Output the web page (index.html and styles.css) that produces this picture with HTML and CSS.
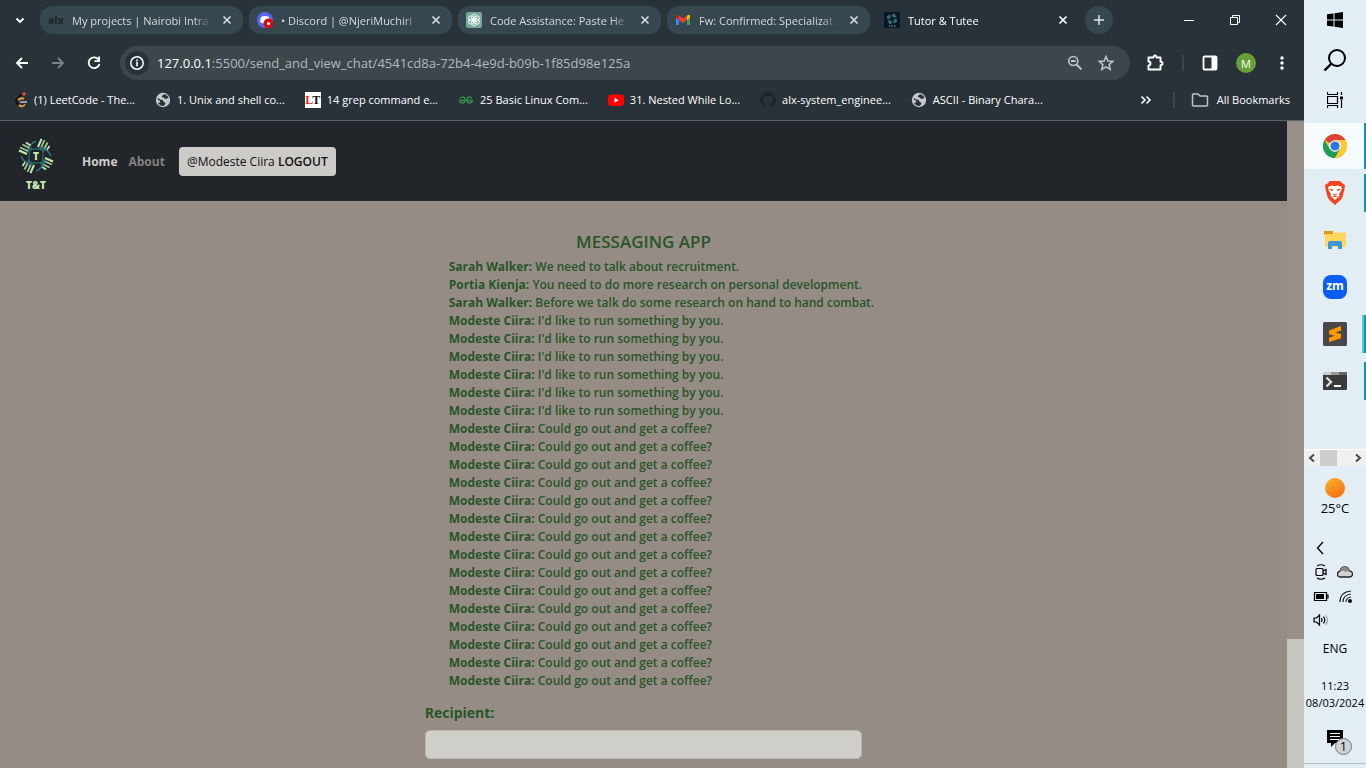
FILE: index.html
```html
<!DOCTYPE html>
<html lang="en">
<head>
<meta charset="utf-8">
<title>Tutor &amp; Tutee</title>
<link rel="stylesheet" href="styles.css">
</head>
<body>
<svg class="defs" aria-hidden="true">
  <symbol id="x" viewBox="0 0 16 16"><path d="M4.500 4.500l7 7M11.500 4.500l-7 7" fill="none" stroke="currentColor" stroke-width="1.700"/></symbol>
  <symbol id="globe" viewBox="0 0 16 16"><circle cx="8" cy="8" r="7.200" fill="#c3c8cc"/><path d="M2.400 6.200c2 .2 2.600 1.600 4.400 1.600 1.700 0 1 2.200 2.700 2.500 1.500.2 1 2.400-.9 3.700-2 .2-4.700-1-5.700-3.200 1.500 0 2.800-.4 2.300-1.600C4.500 8 2.400 8 2.400 6.200zM8.500 2.200c-.2 1.500-1.800 1.300-1.700 2.500.1 1 2 .3 2.500 1.400.5 1.200 2.300 1.100 3 .2.500-.5 1.200-.4 1.500.1C13.200 4 11.200 2.300 8.500 2.200z" fill="#29333a"/></symbol>
  <symbol id="mark" viewBox="0 0 40 54">
    <g id="arm"><path d="M22 11l3.500-8" stroke="#c6eab0" stroke-width="2"/><path d="M25 12l3.500-8M28 13.500l3.500-7" stroke="#9fc595" stroke-width="1.800"/><path d="M30.500 14.500l3-4.500" stroke="#c6eab0" stroke-width="1.600"/><path d="M23.500 12.500l5 3" stroke="#3f6c66" stroke-width="1.500"/><path d="M11 16q2-8 9-11" stroke="#2b7a80" stroke-width="1.400" fill="none"/></g>
    <use href="#arm" transform="rotate(90 20 20)"/><use href="#arm" transform="rotate(180 20 20)"/><use href="#arm" transform="rotate(270 20 20)"/>
    <path d="M13 25V17q0-4 5-4h6M27 15v8q0 4-5 4h-7" fill="none" stroke="#24616b" stroke-width="1.300"/>
  </symbol>
</svg>
<div class="desktop">
<div class="browser">
  <header class="tabstrip">
    <button class="plain list" aria-label="Search tabs"><svg width="16" height="16" viewBox="0 0 16 16"><path d="M4.500 6.500L8 10l3.500-3.500" fill="none" stroke="#fff" stroke-width="1.800"/></svg></button>
    <div class="tab"><span class="alx">alx</span><span class="title">My projects | Nairobi Intra</span><button class="plain" aria-label="Close"><svg width="16" height="16"><use href="#x"/></svg></button></div>
    <div class="tab"><svg width="16" height="16" viewBox="0 0 16 16"><circle cx="8" cy="8" r="8" fill="#5865f2"/><path d="M4 5q4-2 8 0l1 5q-5 3-10 0z" fill="#fff"/><circle cx="11.500" cy="11.500" r="5" fill="#d90b12"/><circle cx="11.500" cy="11.500" r="1.500" fill="#fff"/></svg><span class="title">• Discord | @NjeriMuchiri</span><button class="plain" aria-label="Close"><svg width="16" height="16"><use href="#x"/></svg></button></div>
    <div class="tab"><svg width="16" height="16" viewBox="0 0 16 16"><rect width="16" height="16" rx="2" fill="#74aa9c"/><g fill="none" stroke="#eef7f4" stroke-width="1"><ellipse cx="8" cy="5.500" rx="2.400" ry="3.400" id="pt"/><use href="#pt" transform="rotate(60 8 8)"/><use href="#pt" transform="rotate(120 8 8)"/><use href="#pt" transform="rotate(180 8 8)"/><use href="#pt" transform="rotate(240 8 8)"/><use href="#pt" transform="rotate(300 8 8)"/></g></svg><span class="title">Code Assistance: Paste He</span><button class="plain" aria-label="Close"><svg width="16" height="16"><use href="#x"/></svg></button></div>
    <div class="tab"><svg width="16" height="16" viewBox="0 0 16 16"><path d="M1 4v9h3V7z" fill="#4285f4"/><path d="M15 4v9h-3V7z" fill="#34a853"/><path d="M4 3.500l4 3 4-3V8l-4 3-4-3z" fill="#ea4335"/><path d="M1 4q0-2 3-.5V8L1 5.800z" fill="#c5221f"/><path d="M15 4q0-2-3-.5V8l3-2.200z" fill="#fbbc04"/></svg><span class="title">Fw: Confirmed: Specializat</span><button class="plain" aria-label="Close"><svg width="16" height="16"><use href="#x"/></svg></button></div>
    <div class="tab active"><svg width="16" height="16" viewBox="0 0 16 16"><rect width="16" height="16" fill="#04192c"/><svg x="2" y="1" width="12" height="16"><use href="#mark"/></svg><path d="M5 14h1.500M7.500 14H9M10 14h1.500" stroke="#86a897"/></svg><span class="title">Tutor &amp; Tutee</span><button class="plain" aria-label="Close"><svg width="16" height="16"><use href="#x"/></svg></button></div>
    <button class="plain plus" aria-label="New tab"><svg width="14" height="14" viewBox="0 0 14 14"><path d="M7 2v10M2 7h10" stroke="#dfe4e7" stroke-width="1.500"/></svg></button>
    <div class="winctl">
      <button class="plain" aria-label="Minimize"><svg width="12" height="12"><path d="M1 6.500h10" stroke="#fff"/></svg></button>
      <button class="plain" aria-label="Restore"><svg width="12" height="12"><path d="M1.500 3.500h7v7h-7zM3.500 3.500v-2h7v7h-2" fill="none" stroke="#fff"/></svg></button>
      <button class="plain" aria-label="Close window"><svg width="12" height="12"><path d="M1 1l10 10M11 1L1 11" stroke="#fff" stroke-width="1.100"/></svg></button>
    </div>
  </header>
  <div class="toolbar">
    <div class="history">
      <button class="plain" aria-label="Back"><svg width="16" height="16" viewBox="0 0 16 16"><path d="M14 8H3M8 3L3 8l5 5" fill="none" stroke="#fff" stroke-width="1.800"/></svg></button>
      <button class="plain" aria-label="Forward"><svg width="16" height="16" viewBox="0 0 16 16"><path d="M2 8h11M8 3l5 5-5 5" fill="none" stroke="#7b8489" stroke-width="1.800"/></svg></button>
      <button class="plain" aria-label="Reload"><svg width="16" height="16" viewBox="0 0 16 16"><path d="M12.800 5A5.400 5.400 0 1 0 13.400 9" fill="none" stroke="#fff" stroke-width="1.800"/><path d="M14 1.500V7H8.500V5.300h3.700V1.500z" fill="#fff"/></svg></button>
    </div>
    <div class="omnibox">
      <button class="plain info" aria-label="Site information"><svg width="16" height="16" viewBox="0 0 16 16"><circle cx="8" cy="8" r="6.200" fill="none" stroke="#fff" stroke-width="1.500"/><path d="M8 7v4.200M8 4.600v1.600" stroke="#fff" stroke-width="1.600"/></svg></button>
      <a class="url" href="#"><b>127.0.0.1</b>:5500/send_and_view_chat/4541cd8a-72b4-4e9d-b09b-1f85d98e125a</a>
      <button class="plain" aria-label="Zoom"><svg width="16" height="16" viewBox="0 0 16 16"><circle cx="6.300" cy="6" r="4.500" fill="none" stroke="#c1c5c7" stroke-width="1.600"/><path d="M4 6h4.600M9.500 9.500l5 5" stroke="#c1c5c7" stroke-width="1.800"/></svg></button>
      <button class="plain" aria-label="Bookmark"><svg width="18" height="18" viewBox="0 0 18 18"><path d="M9 2.500l1.900 4.500 4.900.4-3.700 3.200 1.100 4.800L9 12.800l-4.200 2.600 1.100-4.800-3.700-3.200 4.900-.4z" fill="none" stroke="#c1c5c7" stroke-width="1.500"/></svg></button>
    </div>
    <div class="tools">
      <button class="plain" aria-label="Extensions"><svg width="18" height="18" viewBox="0 0 18 18"><path d="M2.500 3.500h5q0-2 1.500-2t1.500 2h4v4.300q2 0 2 1.700t-2 1.700v4.300h-12v-4q2 0 2-2t-2-2z" fill="none" stroke="#fff" stroke-width="1.900" stroke-linejoin="round"/></svg></button>
      <i class="rule"></i>
      <button class="plain" aria-label="Side panel"><svg width="16" height="16" viewBox="0 0 16 16"><rect x="1.500" y="1.500" width="13" height="13" rx="1" fill="none" stroke="#fff" stroke-width="1.800"/><path d="M9.500 1h5v14h-5z" fill="#fff"/></svg></button>
      <button class="plain avatar">M</button>
      <button class="plain" aria-label="Menu"><svg width="16" height="16" fill="#fff"><circle cx="8" cy="3" r="1.700"/><circle cx="8" cy="8" r="1.700"/><circle cx="8" cy="13" r="1.700"/></svg></button>
    </div>
  </div>
  <nav class="bookmarks" aria-label="Bookmarks">
    <a href="#"><svg width="14" height="16" viewBox="0 0 14 16"><path d="M8 2L3 7q-2 2 0 4l2 2" fill="none" stroke="#101416" stroke-width="2"/><path d="M5 13q3 3 6-.5M4 8q3-3 6-1" fill="none" stroke="#f5a33b" stroke-width="1.800"/><path d="M6 10h7" stroke="#b9b9b9" stroke-width="1.600"/><circle cx="10" cy="2" r="1.800" fill="#ee4540"/></svg>(1) LeetCode - The...</a>
    <a href="#"><svg width="16" height="16"><use href="#globe"/></svg>1. Unix and shell co...</a>
    <a href="#"><span class="lt"><span>L</span>T</span>14 grep command e...</a>
    <a href="#"><svg width="16" height="16" viewBox="0 0 16 16" fill="none" stroke="#2f8d46" stroke-width="1.400"><path d="M2 6.500Q3 5 5 5q2 0 2 3t-2.500 3Q2 11 1.500 8.500H14.500Q14 11 11.500 11 9 11 9 8t2-3q2 0 3 1.500"/></svg>25 Basic Linux Com...</a>
    <a href="#"><svg width="16" height="16"><rect y="2.500" width="16" height="11.500" rx="3" fill="#f00"/><path d="M6.500 5.800v5l4-2.500z" fill="#fff"/></svg>31. Nested While Lo...</a>
    <a href="#"><svg width="16" height="16" viewBox="0 0 16 16"><path fill="#1c2329" d="M8 0a8 8 0 0 0-2.500 15.600c.4.100.5-.2.500-.4v-1.500c-2.200.5-2.700-1-2.700-1-.4-.9-.9-1.200-.9-1.200-.7-.5.100-.5.100-.5.800.1 1.200.8 1.200.8.700 1.300 1.900.9 2.300.7.100-.5.300-.9.500-1.100-1.800-.2-3.600-.9-3.600-4 0-.9.300-1.600.8-2.100-.1-.2-.4-1 .1-2.100 0 0 .7-.2 2.200.8a7.600 7.600 0 0 1 4 0c1.500-1 2.200-.8 2.200-.8.400 1.100.2 1.900.1 2.100.5.600.8 1.300.8 2.100 0 3.100-1.900 3.800-3.700 4 .3.200.6.700.6 1.500v2.200c0 .2.100.5.500.4A8 8 0 0 0 8 0z"/></svg>alx-system_enginee...</a>
    <a href="#"><svg width="16" height="16"><use href="#globe"/></svg>ASCII - Binary Chara...</a>
    <button class="plain more" aria-label="More bookmarks"><svg width="14" height="14"><path d="M2.500 3.500L6 7l-3.500 3.500M7.500 3.500L11 7l-3.500 3.500" fill="none" stroke="#fff" stroke-width="1.600"/></svg></button>
    <i class="rule"></i>
    <a class="all" href="#"><svg width="18" height="16"><path d="M1.500 3q0-1 1-1h4.500l2 2h6.500q1 0 1 1v8q0 1-1 1h-13q-1 0-1-1z" fill="none" stroke="#c1c5c7" stroke-width="1.500"/></svg>All Bookmarks</a>
  </nav>
  <div class="viewport">
    <div class="page">
      <nav class="navbar">
        <a class="brand" href="#" aria-label="T&amp;T"><svg width="40" height="54" viewBox="0 0 40 54"><use href="#mark"/><text x="20" y="24" class="t1">T</text><text x="20" y="53" class="t2">T&amp;T</text></svg></a>
        <a class="home" href="#">Home</a><a href="#">About</a>
        <button class="logout">@Modeste Ciira <b>LOGOUT</b></button>
      </nav>
      <main class="chat">
        <h1>MESSAGING APP</h1>
        <ul>
          <li><b>Sarah Walker:</b> We need to talk about recruitment.</li>
          <li><b>Portia Kienja:</b> You need to do more research on personal development.</li>
          <li><b>Sarah Walker:</b> Before we talk do some research on hand to hand combat.</li>
          <li><b>Modeste Ciira:</b> I'd like to run something by you.</li>
          <li><b>Modeste Ciira:</b> I'd like to run something by you.</li>
          <li><b>Modeste Ciira:</b> I'd like to run something by you.</li>
          <li><b>Modeste Ciira:</b> I'd like to run something by you.</li>
          <li><b>Modeste Ciira:</b> I'd like to run something by you.</li>
          <li><b>Modeste Ciira:</b> I'd like to run something by you.</li>
          <li><b>Modeste Ciira:</b> Could go out and get a coffee?</li>
          <li><b>Modeste Ciira:</b> Could go out and get a coffee?</li>
          <li><b>Modeste Ciira:</b> Could go out and get a coffee?</li>
          <li><b>Modeste Ciira:</b> Could go out and get a coffee?</li>
          <li><b>Modeste Ciira:</b> Could go out and get a coffee?</li>
          <li><b>Modeste Ciira:</b> Could go out and get a coffee?</li>
          <li><b>Modeste Ciira:</b> Could go out and get a coffee?</li>
          <li><b>Modeste Ciira:</b> Could go out and get a coffee?</li>
          <li><b>Modeste Ciira:</b> Could go out and get a coffee?</li>
          <li><b>Modeste Ciira:</b> Could go out and get a coffee?</li>
          <li><b>Modeste Ciira:</b> Could go out and get a coffee?</li>
          <li><b>Modeste Ciira:</b> Could go out and get a coffee?</li>
          <li><b>Modeste Ciira:</b> Could go out and get a coffee?</li>
          <li><b>Modeste Ciira:</b> Could go out and get a coffee?</li>
          <li><b>Modeste Ciira:</b> Could go out and get a coffee?</li>
        </ul>
        <label for="recipient">Recipient:</label>
        <input id="recipient" type="text">
      </main>
    </div>
    <div class="scrollbar"><div class="thumb"></div></div>
  </div>
</div>
<aside class="taskbar">
  <button class="plain sys" aria-label="Start"><svg width="16" height="16"><path d="M0 2.300L6.500 1.400V7.500H0zM7.500 1.200L16 0v7.500H7.500zM0 8.500h6.500v6.100L0 13.700zM7.500 8.500H16V16l-8.500-1.200z"/></svg></button>
  <button class="plain sys" aria-label="Search"><svg width="24" height="24"><circle cx="14" cy="10" r="8" fill="none" stroke="#000" stroke-width="2"/><path d="M8.500 15.500L1.500 22.500" stroke="#000" stroke-width="2.400"/></svg></button>
  <button class="plain sys" aria-label="Task view"><svg width="16" height="16" fill="none" stroke="#000"><path d="M.5 4.500h10v7H.5zM.5 0v2.500h10V0M.5 16v-2.500h10V16M14.500 0v3M14.500 8v8" stroke-width="1.200"/><path d="M13 4.500h3v3h-3z" fill="#000" stroke="none"/></svg></button>
  <div class="apps">
    <button class="plain app current" aria-label="Chrome"><svg width="24" height="24" viewBox="0 0 24 24"><circle cx="12" cy="12" r="12" fill="#fcc934"/><path d="M12 12L1.600 6A12 12 0 0 1 22.400 6H12z" fill="#db4437"/><path d="M12 24A12 12 0 0 1 1.600 6l5.200 9L12 18l5.200-3z" fill="#1e9e54"/><path d="M12 6h10.400A12 12 0 0 1 12 24l5.200-9z" fill="#fcc934"/><circle cx="12" cy="12" r="5.800" fill="#fff"/><circle cx="12" cy="12" r="4.600" fill="#2f76e8"/></svg></button>
    <button class="plain app open" aria-label="Brave"><svg width="22" height="24" viewBox="0 0 22 24"><path d="M6 0h10l2.500 2.500L21 4l-.5 4-2 8-2 3L11 24l-5.500-5-2-3-2-8L1 4l2.500-1.500z" fill="#f4431f"/><path d="M4 6l4-1.500 3 .8 3-.8L18 6l-1 4-2 3 .5 2-4.500 4-4.500-4 .5-2-2-3z" fill="#fff"/><path d="M6 8l3 1-1 1zM16 8l-3 1 1 1zM9 13l2 1 2-1M8.500 16l2.500-1.200 2.500 1.200" fill="#f4431f" stroke="#f4431f" stroke-width=".8"/></svg></button>
    <button class="plain app" aria-label="File Explorer"><svg width="22" height="18"><path d="M0 0h9v4H0z" fill="#d99b13"/><path d="M1 3h8l1.500-1.500H22V16H1z" fill="#ffd75e"/><path d="M4 18v-6q0-2 2-2h10q2 0 2 2v6h-4v-3H8v3z" fill="#3c97d6"/></svg></button>
    <button class="plain app" aria-label="Zoom"><span class="zm">zm</span></button>
    <button class="plain app open multi" aria-label="Sublime Text"><svg width="24" height="24"><rect width="24" height="24" rx="1.500" fill="#484848"/><path d="M6 8.500L18 4v4.500L12.500 10.500 18 12v4.300L6 20v-4.200l5.500-2.100L6 12.300z" fill="#ff9800"/></svg></button>
    <button class="plain app open" aria-label="Terminal"><svg width="24" height="18"><rect width="24" height="18" rx="1" fill="#3b3b3b"/><path d="M0 0h8v3H0z" fill="#ccc"/><path d="M8 0h8v3H8z" fill="#999"/><path d="M16 0h8v3h-8z" fill="#666"/><path d="M3.500 5.500L8 10l-4.500 4.500" fill="none" stroke="#ddd" stroke-width="2.400"/><path d="M11 14h7" stroke="#fff" stroke-width="2"/></svg></button>
  </div>
  <div class="tray">
    <div class="hscroll"><svg width="16" height="16"><path d="M10 4.500L6 8l4 3.500" fill="none" stroke="#444" stroke-width="1.900"/></svg><i></i><svg width="16" height="16" class="end"><path d="M6 4.500L10 8l-4 3.500" fill="none" stroke="#444" stroke-width="1.900"/></svg></div>
    <div class="sun"></div>
    <div class="temp">25°C</div>
    <div class="icons">
      <svg width="16" height="16"><path d="M10 2L4.500 8l5.500 6" fill="none" stroke="#000" stroke-width="1.300"/></svg><span></span>
      <svg width="16" height="16" fill="none" stroke="#000" stroke-width="1.200"><rect x="3" y="4.500" width="7" height="7" rx="1"/><path d="M10 7l3-1.500v5L10 9M4 2Q8-.5 12 2M4 14q4 2.500 8 0"/></svg>
      <svg width="16" height="16"><path d="M3.500 13Q.5 13 .5 10.200T3 7.200Q4 2.500 8 2.800q3.500.2 4.200 4 3.300.2 3.300 3.200t-3 3z" fill="#d2d2d2" stroke="#222" stroke-width="1.300"/><path d="M3 7.200Q4 2.500 8 2.800q3.500.2 4.200 4-2-.3-3.200 1.500Q7 6 3 7.200z" fill="#888"/></svg>
      <svg width="16" height="16"><path d="M1.500 4.500h12v8h-12zM14 7h1v3h-1" fill="none" stroke="#000" stroke-width="1.200"/><path d="M3 6h8v5H3z"/></svg>
      <svg width="16" height="16" fill="none" stroke="#222" stroke-width="1.200"><path d="M3 14Q3 4 14 3M6 14q0-7 8-8M9 14q0-4 5-5"/><circle cx="13" cy="13" r="1.500" fill="#000"/></svg>
      <svg width="16" height="16" fill="none" stroke="#000" stroke-width="1.200"><path d="M1 6h2.500l3-3v10l-3-3H1zM8.500 6q1 2 0 4M10.500 4.500q2.500 3.500 0 7"/><path d="M12.500 3q4 5 0 10" stroke="#9aa4aa"/></svg><span></span>
    </div>
    <div class="lang">ENG</div>
    <div class="clock">11:23<br>08/03/2024</div>
    <button class="plain note" aria-label="Notifications"><svg width="26" height="26"><path d="M1 1h16v13H9l-4 4v-4H1z"/><path d="M4 4.500h10M4 7.500h10M4 10.500h10" stroke="#fff"/></svg><span>1</span></button>
  </div>
</aside>
</div>
</body>
</html>
```

FILE: styles.css
```css
* { box-sizing: border-box; }
body { margin: 0; font-family: "Open Sans", "Noto Sans", sans-serif; font-size: 12px; }
a { color: inherit; text-decoration: none; }
.defs { position: absolute; width: 0; height: 0; }
.plain { display: flex; align-items: center; justify-content: center; padding: 0; border: 0; background: none; color: inherit; font: inherit; }
svg { flex: none; }
.desktop { display: flex; height: 100vh; overflow: hidden; }
.browser { flex: 1; min-width: 0; display: flex; flex-direction: column; background: #293238; color: #fff; }

.tabstrip { display: flex; align-items: center; gap: 6px; height: 40px; padding-left: 12px; font-size: 11px; }
.list { width: 16px; margin-right: 6px; }
.tab { flex: 0 1 203px; min-width: 0; height: 28px; display: flex; align-items: center; gap: 8px; padding: 0 8px; border-radius: 12px; background: #37474f; color: #d5dadd; }
.tab .title { flex: 1; overflow: hidden; white-space: nowrap; -webkit-mask-image: linear-gradient(to right, #000 88%, transparent); mask-image: linear-gradient(to right, #000 88%, transparent); }
.tab.active { background: none; color: #fff; }
.alx { width: 16px; color: #20292e; font-size: 10px; font-weight: 800; }
.plus { width: 28px; height: 28px; border-radius: 50%; background: #37474f; }
.winctl { display: flex; margin-left: auto; }
.winctl button { width: 46px; height: 40px; }

.toolbar { display: flex; align-items: center; height: 46px; }
.history { display: flex; gap: 20px; padding: 0 18px 0 14px; }
.omnibox { flex: 1; display: flex; align-items: center; gap: 14px; height: 34px; padding: 0 15px 0 5px; border-radius: 17px; background: #3c464b; }
.info { width: 24px; height: 24px; border-radius: 50%; background: #293238; }
.url { flex: 1; margin-left: -6px; color: #b4b9bc; font-size: 13px; white-space: nowrap; }
.url b { color: #fff; font-weight: 400; }
.tools { display: flex; align-items: center; gap: 18px; padding: 0 14px 0 16px; }
.rule { width: 2px; height: 16px; background: #37474f; }
.avatar { width: 20px; height: 20px; border-radius: 50%; background: #689f38; font-size: 11px; }

.bookmarks { display: flex; align-items: center; gap: 20px; height: 35px; padding: 0 14px 7px; border-bottom: 1px solid #5b6468; font-size: 11px; white-space: nowrap; }
.bookmarks a { display: flex; align-items: center; gap: 6px; }
.lt { width: 16px; height: 16px; background: #fff; color: #111; font: bold 12px/16px "Liberation Serif", serif; text-align: center; }
.lt span { color: #d22; }
.more { margin-left: auto; }
.bookmarks .all { margin-left: -4px; gap: 8px; }

.viewport { flex: 1; min-height: 0; display: flex; background: #958d85; overflow: hidden; }
.page { flex: 1; min-width: 0; }
.scrollbar { width: 17px; display: flex; flex-direction: column; justify-content: flex-end; background: #999089; }
.thumb { height: 20%; background: #c7c5c0; }
.navbar { display: flex; align-items: center; gap: 11px; height: 80px; padding: 0 16px; background: #222529; color: #84837f; font-weight: 700; }
.brand { display: flex; margin: 4px 15px 0 0; }
.t1, .t2 { fill: #c6eab0; font-weight: 800; text-anchor: middle; }
.t1, .t2 { font-size: 10px; }
.home { color: #d0cec9; }
.logout { height: 29px; margin-left: 3px; padding: 0 8px; border: 0; border-radius: 4px; background: #cdcbc7; color: #111; font: inherit; font-weight: 400; white-space: nowrap; }
.logout b { font-weight: 600; }
.chat { width: 34%; margin: 0 auto; padding-top: 30px; display: flex; flex-direction: column; color: #285428; font-weight: 600; }
.chat h1 { margin: 0 0 6px; font-size: 17px; line-height: 21px; font-weight: 600; text-align: center; }
.chat ul { margin: 0 0 12px; padding: 0 0 0 24px; list-style: none; line-height: 18px; white-space: nowrap; }
.chat b { font-weight: 700; }
.chat label { margin-bottom: 7px; font-size: 14px; line-height: 21px; font-weight: 700; }
.chat input { width: 100%; height: 29px; border: 1px solid #b9b6b1; border-radius: 5px; background: #d0cec9; }

.taskbar { width: 62px; display: flex; flex-direction: column; background: #e2edf4; color: #000; }
.sys { height: 40px; }
.apps { display: flex; flex-direction: column; gap: 1px; padding-top: 3px; }
.app { height: 46px; background: linear-gradient(#0099b9, #0099b9) right center / 0 38px no-repeat; }
.app.open { background-size: 2px 38px; }
.app.multi { background: linear-gradient(to right, #62c3d8 50%, #0099b9 50%) right center / 4px 38px no-repeat; }
.app.current { background-color: #f5fafc; background-size: 2px 46px; }
.zm { width: 24px; height: 24px; border-radius: 8px; background: #0b5cf0; color: #fff; font-weight: 700; line-height: 22px; text-align: center; }
.tray { margin-top: auto; display: flex; flex-direction: column; align-items: center; border-bottom: 1px solid #b6c0c7; margin-bottom: 4px; }
.hscroll { width: 100%; height: 17px; display: flex; border-top: 1px solid #fff; background: #f0f0f0; }
.hscroll i { width: 17px; background: #cdcdcd; }
.hscroll .end { margin-left: auto; }
.sun { width: 20px; height: 20px; margin-top: 12px; border-radius: 50%; background: linear-gradient(150deg, #f9b52b, #f4650f); }
.temp { font-size: 13px; line-height: 20px; }
.icons { display: grid; grid-template-columns: 16px 16px; gap: 8px; margin: 22px 4px 0 0; }
.lang { margin-top: 12px; line-height: 18px; font-size: 12px; }
.clock { margin-top: 19px; line-height: 17px; font-size: 11px; text-align: center; }
.note { position: relative; width: 26px; height: 26px; margin: 18px 0 8px 8px; }
.note span { position: absolute; right: 0; bottom: 0; width: 17px; height: 17px; border: 1px solid #777; border-radius: 50%; background: #ccd2d6; line-height: 15px; text-align: center; }
```
